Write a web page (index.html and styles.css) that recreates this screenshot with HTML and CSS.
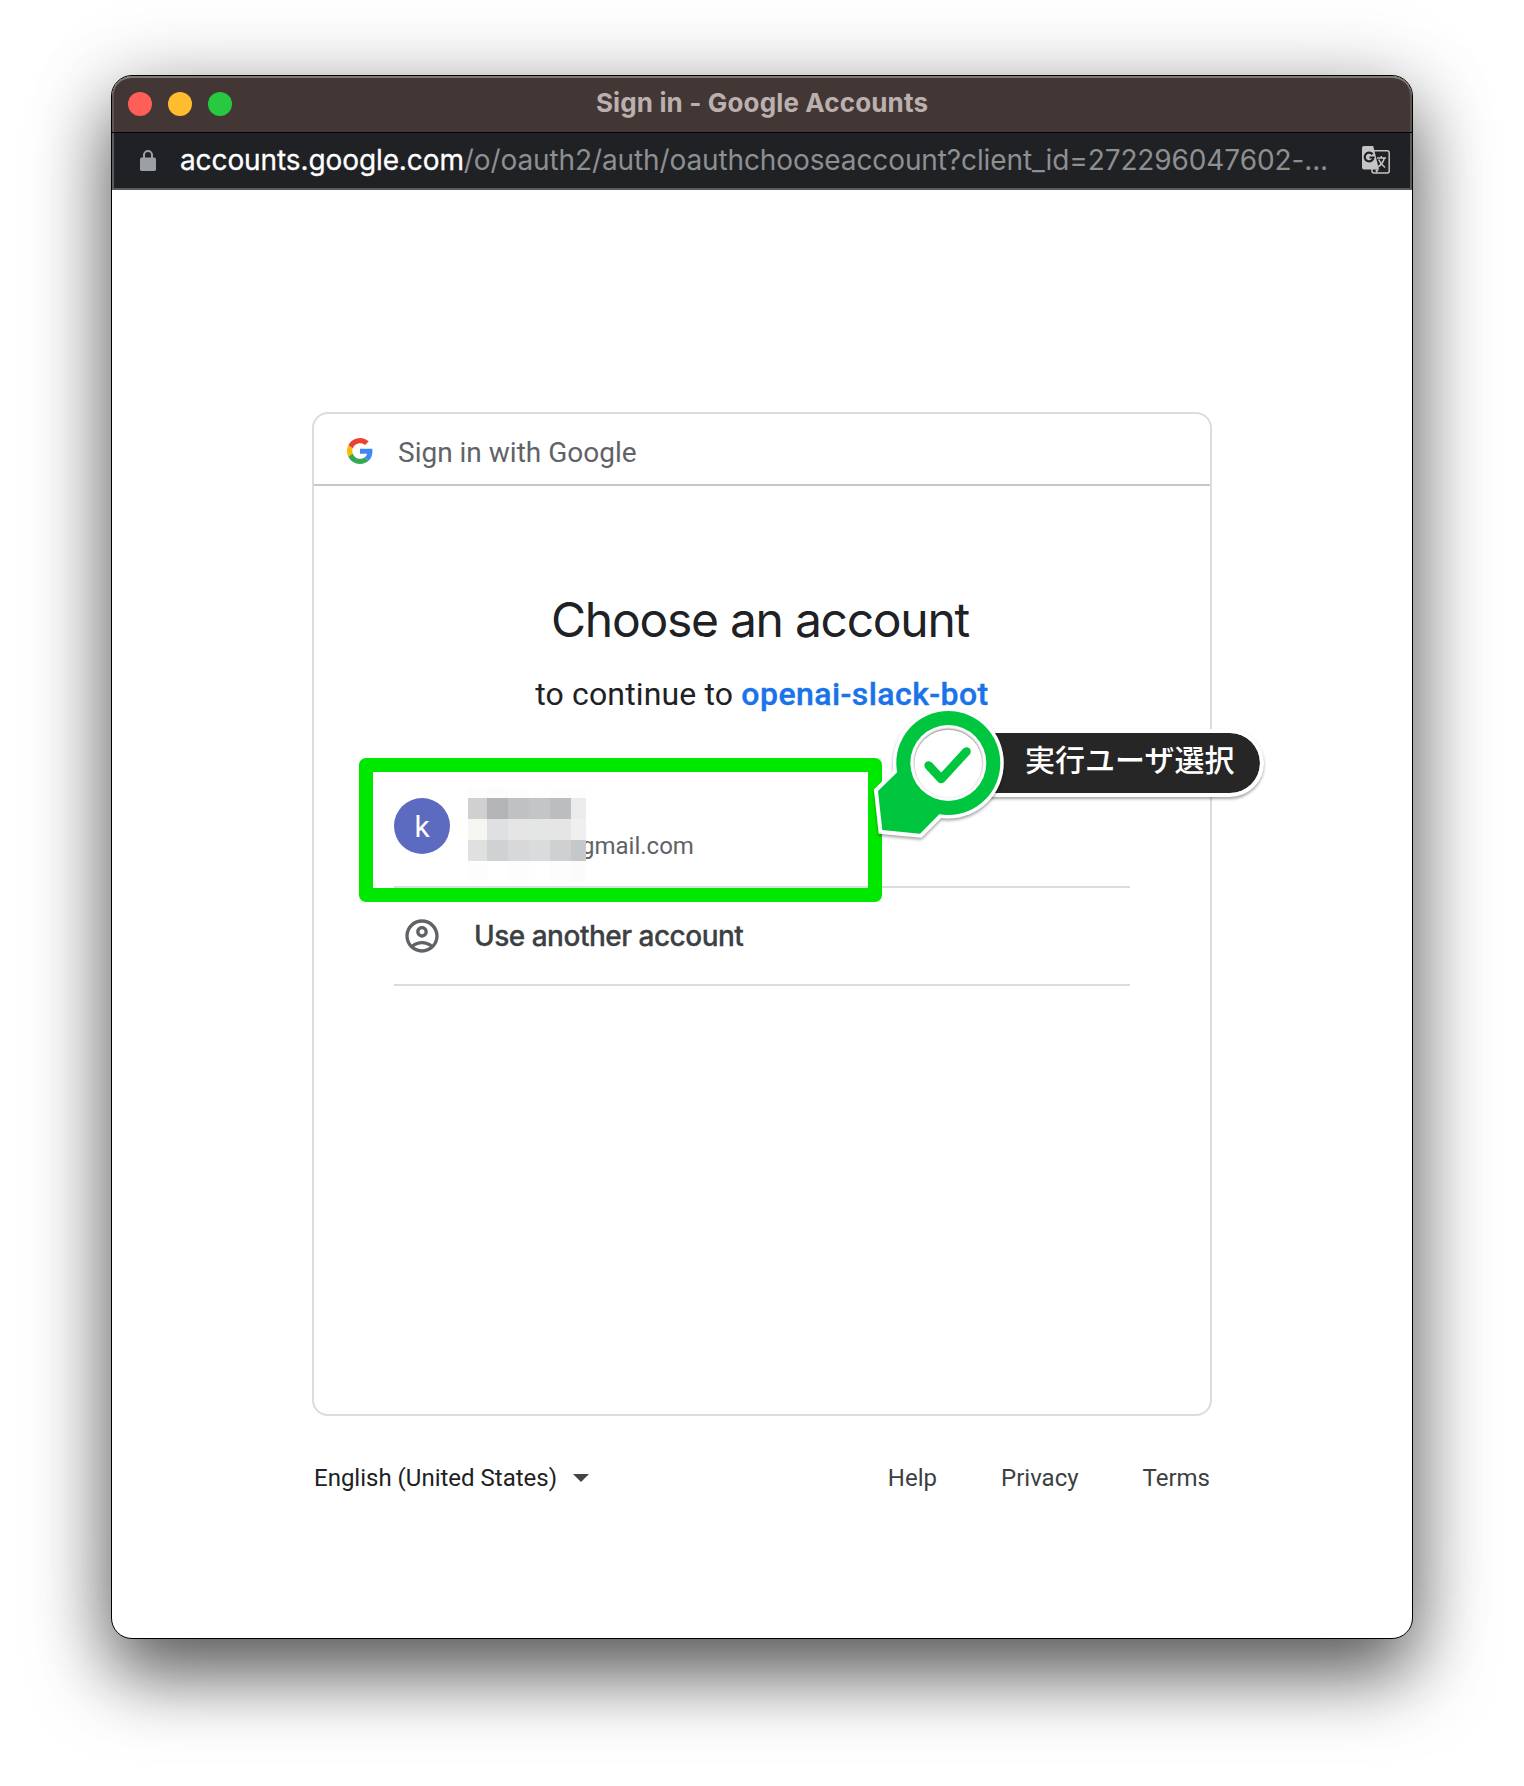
FILE: index.html
```html
<!DOCTYPE html>
<html lang="en">
<head>
<meta charset="utf-8">
<title>Sign in - Google Accounts</title>
<link rel="stylesheet" href="styles.css">
</head>
<body>
<div class="window">
  <header class="titlebar">
    <div class="lights"><i class="light red"></i><i class="light yellow"></i><i class="light green"></i></div>
    <div class="window-title">Sign in - Google Accounts</div>
  </header>
  <div class="urlbar">
    <svg class="lock" width="16" height="22" viewBox="0 0 16 22"><path d="M4 9V5a4 4 0 0 1 8 0v4" fill="none" stroke="#9aa0a6" stroke-width="2"/><rect y="7.500" width="16" height="13.500" rx="1.800" fill="#9aa0a6"/></svg>
    <div class="url"><span class="host">accounts.google.com</span><span class="path">/o/oauth2/auth/oauthchooseaccount?client_id=272296047602-...</span></div>
    <svg class="translate" width="28" height="28" viewBox="0 0 28 28">
      <rect x="10" y="4.700" width="17.200" height="22.200" rx="2" fill="none" stroke="#c4c4c4" stroke-width="1.500"/>
      <path d="M2 0h9.200l5.800 23.500h-15a2 2 0 0 1-2-2V2a2 2 0 0 1 2-2z" fill="#c4c4c4"/>
      <path d="M13.500 23.500h3.500l-3 4z" fill="#c4c4c4"/>
      <path d="M10.600 8.300A4.400 4.400 0 1 0 11.500 11.500H7.500" fill="none" stroke="#202124" stroke-width="2.200"/>
      <path d="M15 12h9M19.300 10v2M22.300 12c-.8 4-3.500 7-6.300 9M16.700 13.500c1.300 3.500 3.600 6 6.300 8" fill="none" stroke="#c4c4c4" stroke-width="1.500"/>
    </svg>
  </div>
  <main class="page">
    <section class="card">
      <div class="card-head">
        <svg class="logo" width="26" height="26" viewBox="0 0 48 48">
          <path fill="#EA4335" d="M24 9.500c3.540 0 6.710 1.220 9.210 3.600l6.850-6.850C35.900 2.380 30.470 0 24 0 14.620 0 6.510 5.380 2.560 13.220l7.980 6.190C12.430 13.720 17.740 9.500 24 9.500z"/>
          <path fill="#4285F4" d="M46.980 24.550c0-1.570-.15-3.090-.38-4.550H24v9.020h12.940c-.58 2.960-2.260 5.480-4.780 7.180l7.730 6c4.510-4.180 7.090-10.360 7.090-17.650z"/>
          <path fill="#FBBC05" d="M10.530 28.590c-.48-1.450-.76-2.990-.76-4.590s.27-3.140.76-4.590l-7.980-6.190C.92 16.460 0 20.120 0 24c0 3.880.92 7.540 2.560 10.780l7.970-6.190z"/>
          <path fill="#34A853" d="M24 48c6.480 0 11.930-2.130 15.890-5.810l-7.730-6c-2.150 1.450-4.920 2.300-8.160 2.300-6.260 0-11.570-4.220-13.470-9.910l-7.980 6.190C6.510 42.620 14.620 48 24 48z"/>
        </svg>
        <span class="brand">Sign in with Google</span>
      </div>
      <h1 class="heading">Choose an account</h1>
      <p class="sub">to continue to <a class="app">openai-slack-bot</a></p>
      <ul class="accounts">
        <li class="account">
          <span class="avatar">k</span>
          <span class="email">gmail.com</span>
          <div class="mosaic">
            <i class="m1"></i><i class="m2"></i><i class="m1"></i><i class="m0"></i><i class="m1"></i><i class="m1"></i>
            <i class="a1"></i><i class="a2"></i><i class="a3"></i><i class="a4"></i><i class="a5"></i><i class="a6"></i>
            <i class="b1"></i><i class="b2"></i><i class="b3"></i><i class="b4"></i><i class="b5"></i><i class="b6"></i>
            <i class="c1"></i><i class="c2"></i><i class="c3"></i><i class="c4"></i><i class="c5"></i><i class="c6"></i>
            <i class="m1"></i><i class="m0"></i><i class="m1"></i><i class="m0"></i><i class="m1"></i><i class="m3"></i>
          </div>
          <div class="highlight"></div>
        </li>
        <li class="other">
          <svg class="person" width="40" height="40" viewBox="0 0 24 24"><path fill="#5f6368" d="M12 2C6.480 2 2 6.480 2 12s4.480 10 10 10 10-4.480 10-10S17.520 2 12 2zM7.350 18.500C8.660 17.560 10.260 17 12 17s3.340.560 4.650 1.500C15.340 19.440 13.740 20 12 20s-3.340-.560-4.650-1.500zm10.790-1.380C16.450 15.800 14.320 15 12 15s-4.450.8-6.140 2.120C4.700 15.730 4 13.950 4 12c0-4.420 3.580-8 8-8s8 3.580 8 8c0 1.950-.7 3.730-1.860 5.120zM12 6c-1.930 0-3.500 1.570-3.500 3.500S10.070 13 12 13s3.500-1.570 3.500-3.500S13.930 6 12 6zm0 5c-.83 0-1.500-.67-1.500-1.500S11.170 8 12 8s1.500.67 1.500 1.500S12.830 11 12 11z"/></svg>
          <span class="other-label">Use another account</span>
        </li>
      </ul>
      <div class="callout">
        <div class="callout-label">実行ユーザ選択</div>
        <svg class="pin" width="150" height="140" viewBox="870 705 150 140">
          <g class="pin-shape">
            <path d="M897.700 771.700L878 791l4.300 39 37.700 3.700 19.300-19.400z" fill="#fff" stroke="#fff" stroke-width="8"/>
            <circle cx="948.300" cy="763" r="55.500" fill="#fff"/>
          </g>
          <path d="M897.700 771.700L878 791l4.300 39 37.700 3.700 19.300-19.400z" fill="#00c63f"/>
          <circle cx="948.300" cy="763" r="52" fill="#00c63f"/>
          <circle cx="948.300" cy="763" r="38" fill="#fff"/>
          <circle cx="948.300" cy="763.500" r="33.800" fill="#fff" class="disc"/>
          <path d="M928.700 765.500l12.500 13.500 25.300-27.500" fill="none" stroke="#00c63f" stroke-width="8.600" stroke-linecap="round" stroke-linejoin="round"/>
        </svg>
      </div>
    </section>
    <footer class="footer">
      <span class="lang">English (United States)</span><i class="caret"></i>
      <nav class="links"><a>Help</a><a>Privacy</a><a>Terms</a></nav>
    </footer>
  </main>
</div>
</body>
</html>
```
FILE: styles.css
```css
* { box-sizing: border-box; }
body { margin: 0; background: #fff; height: 1786px; overflow: hidden; padding: 75px 111px; font-family: Roboto, sans-serif; }
.window { width: 1302px; height: 1564px; border: 1px solid #000; border-radius: 21px; overflow: hidden; background: #fff; box-shadow: 0 36px 74px rgba(0,0,0,.62), 0 0 90px rgba(0,0,0,.14); }
.titlebar { height: 57px; background: #423735; border-bottom: 1px solid #000; border-radius: 20px 20px 0 0; box-shadow: inset 0 2px 0 #7f7a72, inset 2px 0 0 #5d5553, inset -2px 0 0 #5d5553; display: grid; grid-template-columns: 200px 1fr 200px; align-items: center; }
.lights { display: flex; gap: 16px; padding-left: 16px; }
.light { width: 24px; height: 24px; border-radius: 50%; }
.red { background: #ff5f57; }
.yellow { background: #febc2e; }
.green { background: #28c840; }
.window-title { font: 700 26px/54px Inter, sans-serif; letter-spacing: .14px; padding-bottom: 2px; color: #bcb0af; text-align: center; white-space: nowrap; }
.urlbar { height: 57px; background: #202124; border: solid #5b5c60; border-width: 0 2px 2px; display: flex; align-items: center; }
.lock { margin-left: 26px; }
.url { margin-left: 24px; width: 1182px; font: 400 28px/55px Inter, sans-serif; color: #8e8f91; white-space: nowrap; letter-spacing: -.11px; }
.host { color: #fff; letter-spacing: -.1px; -webkit-text-stroke: .3px #fff; }
.translate { margin-bottom: 2px; }
.page { padding: 222px 200px 0; }
.card { position: relative; width: 900px; height: 1004px; border: 2px solid #dadce0; border-radius: 16px; }
.card-head { height: 72px; border-bottom: 2px solid #c7c7c9; display: flex; align-items: center; padding: 4px 0 0 33px; }
.brand { margin-left: 25px; font-size: 28px; line-height: 36px; padding-top: 4px; color: #5f6368; }
.heading { margin: 102px 0 0; padding-right: 4px; font: 400 48px/64px Inter, sans-serif; letter-spacing: -1.28px; text-align: center; color: #202124; }
.sub { margin: 18px 0 0; font-size: 32px; line-height: 48px; letter-spacing: .15px; text-align: center; color: #202124; }
.app { color: #1a73e8; font-weight: 500; letter-spacing: .44px; -webkit-text-stroke: .4px #1a73e8; }
.accounts { list-style: none; margin: 45px 80px 0; padding: 0; }
.account { position: relative; height: 125px; border-bottom: 2px solid #dadce0; display: flex; padding-top: 35px; }
.avatar { width: 56px; height: 56px; border-radius: 50%; background: #5c6bc0; color: #fff; font-size: 30px; line-height: 57px; text-align: center; }
.email { margin: 32px 0 0 131px; font-size: 24px; line-height: 32px; color: #5f6368; }
.mosaic { position: absolute; left: 74px; top: 25px; display: grid; grid-template-columns: 19px 21px 21px 21px 21px 15px; grid-template-rows: 10px 21px 21px 21px 20px; }
.m0 { background: #fff; } .m1 { background: #fdfdfd; } .m2 { background: #fbfdfc; } .m3 { background: #fbfbfb; }
.a1 { background: #d0d0d0; } .a2 { background: #b3b4b6; } .a3 { background: #c0c1c3; } .a4 { background: #c4c5c7; } .a5 { background: #bcbdbf; } .a6 { background: #ebebec; }
.b1 { background: #f6f6f1; } .b2 { background: #dfe0e2; } .b3 { background: #e5e5e5; } .b4 { background: #e4e6e5; } .b5 { background: #e5e5e5; } .b6 { background: #efeff0; }
.c1 { background: #dfe1e0; } .c2 { background: #d0d1d3; } .c3 { background: #d7d8da; } .c4 { background: #dadbdd; } .c5 { background: #ced0d2; } .c6 { background: #c6c7c9; }
.highlight { position: absolute; left: -35px; top: -5px; width: 523px; height: 144px; border: 14px solid #00e800; border-radius: 7px; }
.other { height: 98px; border-bottom: 2px solid #dadce0; display: flex; align-items: center; padding-left: 8px; }
.other-label { margin-left: 32px; font: 500 28px/40px Inter, sans-serif; letter-spacing: -.5px; -webkit-text-stroke: .3px #3c4043; color: #3c4043; }
.callout { position: absolute; left: 556px; top: 291px; }
.callout-label { position: absolute; left: 80px; top: 24px; width: 314px; height: 68px; border: 4px solid #fff; border-radius: 34px; background: #262626; background-clip: padding-box; box-shadow: 0 2px 3px rgba(0,0,0,.35); color: #fff; font: 500 30px/51px "Noto Sans CJK JP", sans-serif; padding-left: 71px; white-space: nowrap; }
.pin { position: absolute; left: 0; top: 0; }
.pin-shape { filter: drop-shadow(0 2px 1.5px rgba(0,0,0,.35)); }
.disc { filter: drop-shadow(0 -.5px 1.200px rgba(0,0,0,.5)); }
.footer { display: flex; align-items: center; padding: 42px 0 0 2px; font-size: 24px; line-height: 40px; color: #202124; width: 900px; }
.caret { margin-left: 16px; border: 8px solid transparent; border-top-color: #444; border-bottom: 0; }
.links { margin-left: auto; display: flex; gap: 64px; color: #3c4043; padding-right: 2px; }
```
